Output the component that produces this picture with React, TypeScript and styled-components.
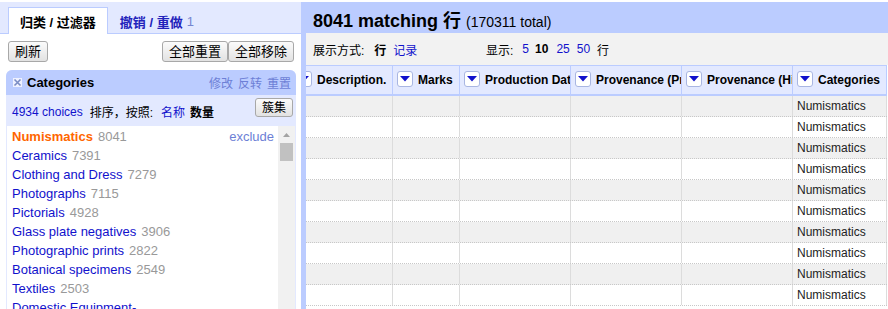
import React from 'react';
import styled, { createGlobalStyle } from 'styled-components';

const GlobalStyle = createGlobalStyle`
  html, body { margin: 0; padding: 0; background: #fff; }
  body {
    font-family: "Liberation Sans", Arial, "Noto Sans CJK SC", sans-serif;
    font-size: 13px;
    color: #000;
  }
`;

const Page = styled.div`
  width: 888px;
  height: 309px;
  overflow: hidden;
  padding-top: 2px;
  box-sizing: border-box;
  display: flex;
  background: #fff;
`;

/* ---------- left panel ---------- */
const LeftPanel = styled.div`
  width: 301px;
  flex: none;
  display: flex;
  flex-direction: column;
  min-height: 0;
`;

const TabBar = styled.div`
  height: 32px;
  box-sizing: border-box;
  background: #e3e9ff;
  border-bottom: 1px solid #bbccff;
  display: flex;
  align-items: flex-end;
  padding-left: 8px;
`;

const Tab = styled.div<{ $active?: boolean }>`
  height: 27px;
  box-sizing: border-box;
  display: flex;
  align-items: center;
  padding: 0 11px;
  margin-bottom: -1px;
  font-size: 13px;
  font-weight: bold;
  white-space: nowrap;
  border: 1px solid ${p => (p.$active ? '#bbccff' : 'transparent')};
  border-bottom: none;
  background: ${p => (p.$active ? '#fff' : 'transparent')};
  color: ${p => (p.$active ? '#000' : '#2222bb')};
  margin-left: 0;
`;

const TabCount = styled.span`
  color: #7585d0;
  font-weight: normal;
  margin-left: 4px;
`;

const Toolbar = styled.div`
  display: flex;
  justify-content: space-between;
  padding: 7px 7px 0 8px;
`;

const ButtonGroup = styled.div`
  display: flex;
`;

const Button = styled.button<{ $small?: boolean }>`
  height: ${p => (p.$small ? '19px' : '21px')};
  padding: 0 6px;
  font-family: inherit;
  font-size: ${p => (p.$small ? '12px' : '13px')};
  color: #000;
  border: 1px solid #a8a8a8;
  border-radius: 3px;
  background: linear-gradient(#fbfbfb, #e2e2e2);
  line-height: 1;
  cursor: pointer;
  display: flex;
  align-items: center;
`;

const Facet = styled.div`
  margin: 8px 5px 0 6px;
  flex: 1;
  min-height: 0;
  display: flex;
  flex-direction: column;
  background: #e3e9ff;
  border-radius: 6px 6px 0 0;
  overflow: hidden;
`;

const FacetHeader = styled.div`
  height: 25px;
  flex: none;
  background: #bbccff;
  display: flex;
  align-items: center;
  padding: 0 5px 0 7px;
`;

const FacetTitle = styled.span`
  font-weight: bold;
  font-size: 13px;
  margin-left: 5px;
`;

const FacetLinks = styled.div`
  margin-left: auto;
  display: flex;
  gap: 5px;
  font-size: 12px;
  color: #6d7fd6;
`;

const FacetControls = styled.div`
  height: 31px;
  flex: none;
  box-sizing: border-box;
  display: flex;
  align-items: center;
  padding: 0 3px 0 6px;
  font-size: 12px;
`;

const ControlText = styled.span<{ $link?: boolean; $bold?: boolean; $gap?: number }>`
  color: ${p => (p.$link ? '#11c' : '#000')};
  font-weight: ${p => (p.$bold ? 'bold' : 'normal')};
  margin-right: ${p => p.$gap ?? 5}px;
  margin-top: 2px;
`;

const ClusterButton = styled(Button)`
  margin-left: auto;
  align-self: flex-start;
  margin-top: 3px;
`;

const ChoiceArea = styled.div`
  flex: 1;
  min-height: 0;
  margin: 0 1px;
  background: #fff;
  display: flex;
  overflow: hidden;
`;

const ChoiceList = styled.div`
  flex: 1;
  padding: 1px 4px 0 5px;
  min-width: 0;
`;

const Choice = styled.div`
  display: flex;
  line-height: 19px;
  font-size: 13px;
  white-space: nowrap;
`;

const ChoiceName = styled.span<{ $selected?: boolean }>`
  color: ${p => (p.$selected ? '#ff6600' : '#11c')};
  font-weight: ${p => (p.$selected ? 'bold' : 'normal')};
`;

const ChoiceCount = styled.span`
  color: #999;
  margin-left: 5px;
`;

const Exclude = styled.span`
  margin-left: auto;
  color: #6d7fd6;
`;

const Scrollbar = styled.div`
  width: 17px;
  flex: none;
  background: #f1f1f1;
  display: flex;
  flex-direction: column;
  align-items: center;
`;

const ScrollArrow = styled.div`
  height: 17px;
  width: 17px;
  display: flex;
  align-items: center;
  justify-content: center;
`;

const ScrollThumb = styled.div`
  width: 13px;
  height: 18px;
  background: #c1c1c1;
`;

/* ---------- right panel ---------- */
const RightPanel = styled.div`
  flex: 1;
  min-width: 0;
  background: #bbccff;
  display: flex;
  flex-direction: column;
`;

const ResultHeader = styled.div`
  height: 31px;
  box-sizing: border-box;
  flex: none;
  padding: 7px 0 0 12px;
  line-height: 24px;
  white-space: nowrap;
  overflow: hidden;
`;

const ResultCount = styled.span`
  font-size: 18px;
  font-weight: bold;
`;

const ResultTotal = styled.span`
  font-size: 14px;
  margin-left: 5px;
`;

const RightBody = styled.div`
  margin-left: 5px;
  flex: 1;
  min-height: 0;
  background: #fff;
  display: flex;
  flex-direction: column;
  overflow: hidden;
`;

const ViewBar = styled.div`
  height: 32px;
  flex: none;
  background: #f2f2f2;
  display: flex;
  align-items: center;
  padding-left: 7px;
  font-size: 12px;
  white-space: nowrap;
`;

const ViewGroup = styled.div<{ $width?: number }>`
  display: flex;
  align-items: center;
  ${p => (p.$width ? `width: ${p.$width}px;` : '')}
`;

const ViewItem = styled.span<{ $link?: boolean; $bold?: boolean; $gap?: number }>`
  color: ${p => (p.$link ? '#11c' : '#000')};
  font-weight: ${p => (p.$bold ? 'bold' : 'normal')};
  margin-right: ${p => p.$gap ?? 6}px;
`;

const TableWrap = styled.div`
  flex: 1;
  min-height: 0;
  overflow: hidden;
`;

const Table = styled.div`
  margin-left: -14px;
  width: 595px;
`;

const COLS = '101px 67px 111px 111px 111px 94px';

const HeaderRow = styled.div`
  display: grid;
  grid-template-columns: ${COLS};
  height: 31px;
  box-sizing: border-box;
  background: #e3e9ff;
  border-top: 1px solid #bbccff;
  border-bottom: 2px solid #bbccff;
`;

const HeaderCell = styled.div`
  display: flex;
  align-items: center;
  padding-left: 4px;
  border-right: 1px solid #bbccff;
  overflow: hidden;
  white-space: nowrap;
  font-size: 12px;
  font-weight: bold;
`;

const DropButton = styled.span`
  width: 16px;
  height: 16px;
  flex: none;
  box-sizing: border-box;
  border: 1px solid #a9b6e2;
  border-radius: 3px;
  background: #fff;
  display: flex;
  align-items: center;
  justify-content: center;
  margin-right: 5px;
  margin-top: -2px;
`;

const DataRow = styled.div<{ $odd?: boolean }>`
  display: grid;
  grid-template-columns: ${COLS};
  height: 21px;
  box-sizing: border-box;
  border-bottom: 1px dotted #c8c8c8;
  background: ${p => (p.$odd ? '#f0f0f0' : '#fff')};
`;

const DataCell = styled.div`
  border-right: 1px solid #dcdcdc;
  padding-left: 4px;
  font-size: 12px;
  line-height: 20px;
  color: #222;
  white-space: nowrap;
  overflow: hidden;
`;

const Triangle = () => (
  <svg width="10" height="6" viewBox="0 0 10 6">
    <polygon points="0,0 10,0 5,5.5" fill="#1111cc" />
  </svg>
);

const CloseIcon = () => (
  <svg width="9" height="9" viewBox="0 0 9 9">
    <rect x="0" y="0" width="9" height="9" fill="#eef1ff" />
    <path d="M1.5 1.5 L7.5 7.5 M7.5 1.5 L1.5 7.5" stroke="#7a8cc4" strokeWidth="1.6" />
  </svg>
);

const choices: { name: string; count?: number; selected?: boolean }[] = [
  { name: 'Numismatics', count: 8041, selected: true },
  { name: 'Ceramics', count: 7391 },
  { name: 'Clothing and Dress', count: 7279 },
  { name: 'Photographs', count: 7115 },
  { name: 'Pictorials', count: 4928 },
  { name: 'Glass plate negatives', count: 3906 },
  { name: 'Photographic prints', count: 2822 },
  { name: 'Botanical specimens', count: 2549 },
  { name: 'Textiles', count: 2503 },
  { name: 'Domestic Equipment-' },
];

const columns = [
  'Description.',
  'Marks',
  'Production Date',
  'Provenance (Production)',
  'Provenance (History)',
  'Categories',
];

export default function App() {
  const rows = Array.from({ length: 10 });
  return (
    <>
      <GlobalStyle />
      <Page>
        <LeftPanel>
          <TabBar>
            <Tab $active>归类 / 过滤器</Tab>
            <Tab>
              撤销 / 重做<TabCount>1</TabCount>
            </Tab>
          </TabBar>
          <Toolbar>
            <Button>刷新</Button>
            <ButtonGroup>
              <Button>全部重置</Button>
              <Button>全部移除</Button>
            </ButtonGroup>
          </Toolbar>
          <Facet>
            <FacetHeader>
              <CloseIcon />
              <FacetTitle>Categories</FacetTitle>
              <FacetLinks>
                <span>修改</span>
                <span>反转</span>
                <span>重置</span>
              </FacetLinks>
            </FacetHeader>
            <FacetControls>
              <ControlText $link $gap={7}>4934 choices</ControlText>
              <ControlText $gap={8}>排序，按照:</ControlText>
              <ControlText $link>名称</ControlText>
              <ControlText $bold>数量</ControlText>
              <ClusterButton $small>簇集</ClusterButton>
            </FacetControls>
            <ChoiceArea>
              <ChoiceList>
                {choices.map(c => (
                  <Choice key={c.name}>
                    <ChoiceName $selected={c.selected}>{c.name}</ChoiceName>
                    {c.count !== undefined && <ChoiceCount>{c.count}</ChoiceCount>}
                    {c.selected && <Exclude>exclude</Exclude>}
                  </Choice>
                ))}
              </ChoiceList>
              <Scrollbar>
                <ScrollArrow>
                  <svg width="7" height="4" viewBox="0 0 7 4">
                    <polygon points="0,4 7,4 3.5,0" fill="#a3a3a3" />
                  </svg>
                </ScrollArrow>
                <ScrollThumb />
              </Scrollbar>
            </ChoiceArea>
          </Facet>
        </LeftPanel>
        <RightPanel>
          <ResultHeader>
            <ResultCount>8041 matching 行</ResultCount>
            <ResultTotal>(170311 total)</ResultTotal>
          </ResultHeader>
          <RightBody>
            <ViewBar>
              <ViewGroup $width={173}>
                <ViewItem $gap={10}>展示方式:</ViewItem>
                <ViewItem $bold $gap={7}>行</ViewItem>
                <ViewItem $link>记录</ViewItem>
              </ViewGroup>
              <ViewGroup>
                <ViewItem $gap={9}>显示:</ViewItem>
                <ViewItem $link>5</ViewItem>
                <ViewItem $bold $gap={8}>10</ViewItem>
                <ViewItem $link $gap={7}>25</ViewItem>
                <ViewItem $link $gap={7}>50</ViewItem>
                <ViewItem>行</ViewItem>
              </ViewGroup>
            </ViewBar>
            <TableWrap>
              <Table>
                <HeaderRow>
                  {columns.map(col => (
                    <HeaderCell key={col}>
                      <DropButton>
                        <Triangle />
                      </DropButton>
                      {col}
                    </HeaderCell>
                  ))}
                </HeaderRow>
                {rows.map((_, i) => (
                  <DataRow key={i} $odd={i % 2 === 0}>
                    <DataCell />
                    <DataCell />
                    <DataCell />
                    <DataCell />
                    <DataCell />
                    <DataCell>Numismatics</DataCell>
                  </DataRow>
                ))}
              </Table>
            </TableWrap>
          </RightBody>
        </RightPanel>
      </Page>
    </>
  );
}
